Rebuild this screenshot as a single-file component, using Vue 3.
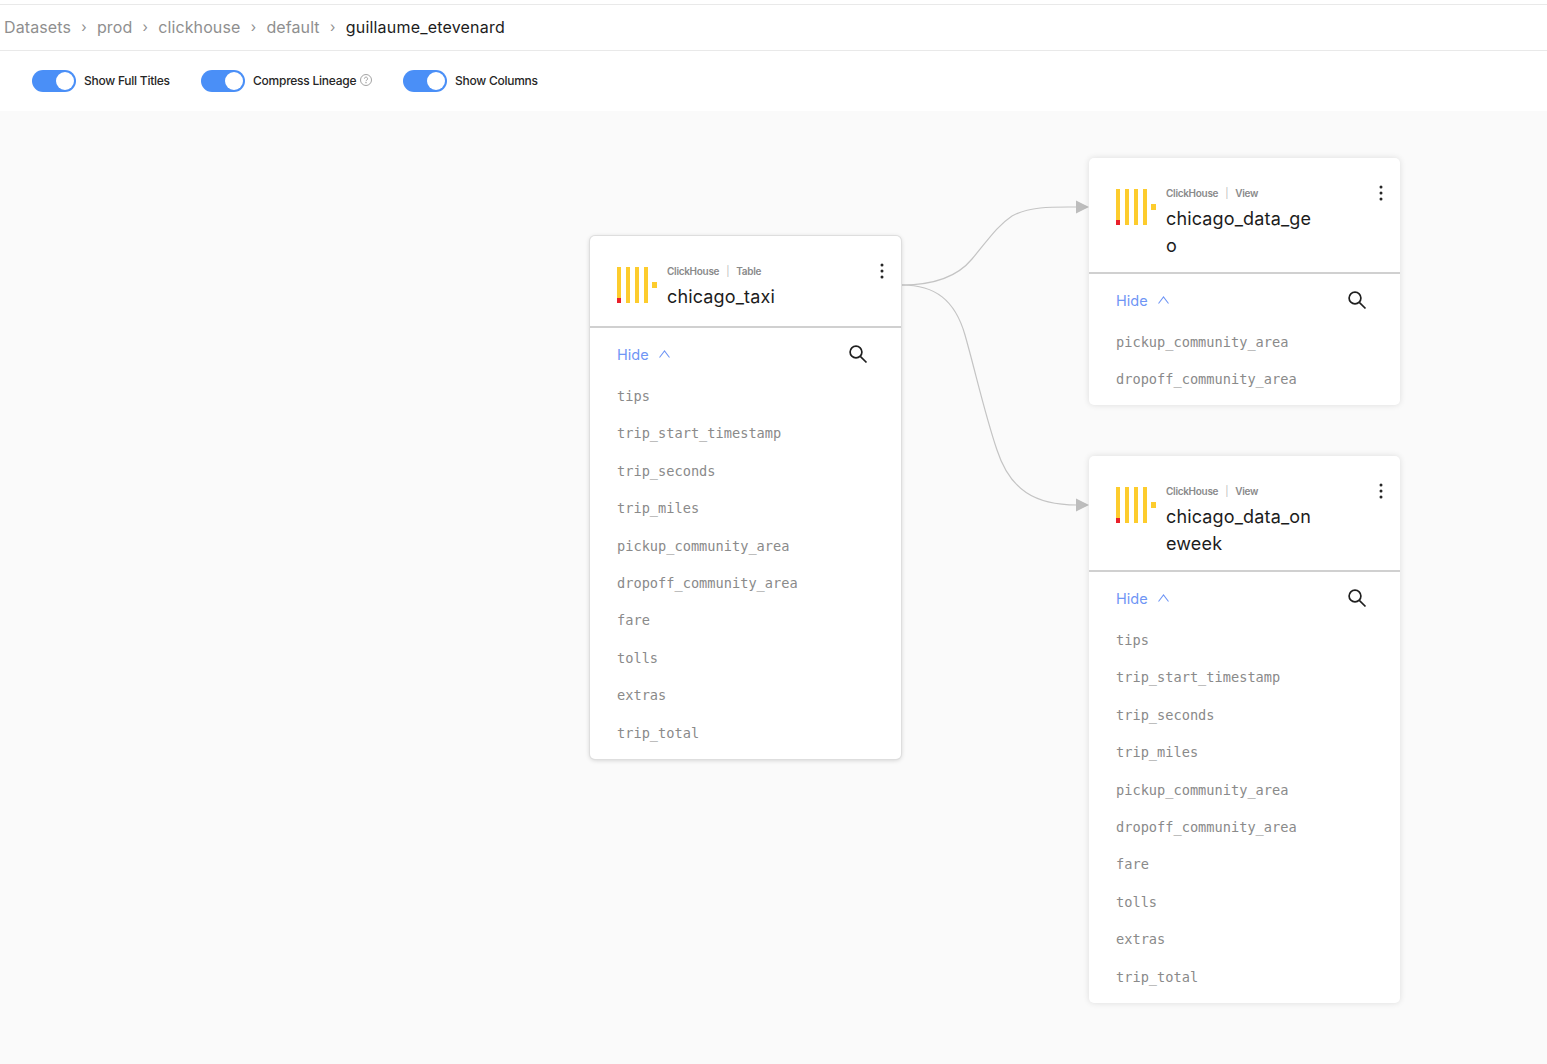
<script setup>
const crumbs = ["Datasets", "prod", "clickhouse", "default"]

const allColumns = [
  "tips",
  "trip_start_timestamp",
  "trip_seconds",
  "trip_miles",
  "pickup_community_area",
  "dropoff_community_area",
  "fare",
  "tolls",
  "extras",
  "trip_total",
]

const nodes = [
  { id: "taxi", kind: "Table", title: "chicago_taxi", x: 590, y: 125, columns: allColumns },
  { id: "geo", kind: "View", title: "chicago_data_geo", x: 1089, y: 47, columns: ["pickup_community_area", "dropoff_community_area"] },
  { id: "week", kind: "View", title: "chicago_data_oneweek", x: 1089, y: 345, columns: allColumns },
]
</script>

<template>
  <div class="page">
    <nav class="crumbs">
      <template v-for="c in crumbs" :key="c">
        <span class="crumb">{{ c }}</span>
        <span class="sep">›</span>
      </template>
      <span class="crumb current">guillaume_etevenard</span>
    </nav>

    <div class="toolbar">
      <label class="opt opt-a">
        <span class="switch"><span class="knob"></span></span>
        <span class="opt-text">Show Full Titles</span>
      </label>
      <label class="opt opt-b">
        <span class="switch"><span class="knob"></span></span>
        <span class="opt-text">Compress Lineage</span>
        <svg class="help" width="12" height="12" viewBox="0 0 12 12" fill="none" stroke="#8c8c8c" stroke-width="0.8">
          <circle cx="6" cy="6" r="5.5" />
          <path d="M4.4 4.7a1.6 1.6 0 1 1 2.5 1.3c-.6.4-.9.6-.9 1.2" />
          <circle cx="6" cy="8.8" r=".3" />
        </svg>
      </label>
      <label class="opt">
        <span class="switch"><span class="knob"></span></span>
        <span class="opt-text">Show Columns</span>
      </label>
    </div>

    <div class="canvas">
      <svg class="edges" width="1547" height="953" viewBox="0 111 1547 953" fill="none">
        <path d="M902 285C935 285 958 276 972 259C988 240 997 226 1012 216C1030 206 1055 207 1077 207" stroke="#c4c4c4" stroke-width="1.2" />
        <path d="M902 285C935 285 955 300 965 335C975 370 985 415 997 450C1010 490 1035 505 1077 505" stroke="#c4c4c4" stroke-width="1.2" />
        <path d="M1076 200.500L1089 207L1076 213.500Z" fill="#bdbdbd" />
        <path d="M1076 498.500L1089 505L1076 511.500Z" fill="#bdbdbd" />
      </svg>

      <section
        v-for="node in nodes"
        :key="node.id"
        class="node"
        :class="{ 'node-raised': node.id === 'taxi' }"
        :style="{ left: node.x + 'px', top: node.y + 'px' }"
      >
        <header class="node-head">
          <svg class="logo" width="41" height="36" viewBox="0 0 41 36">
            <rect x="0" y="0" width="4" height="36" fill="#fdcc2d" />
            <rect x="0" y="31" width="4" height="5" fill="#e9202a" />
            <rect x="9" y="0" width="4" height="36" fill="#fdcc2d" />
            <rect x="18" y="0" width="4" height="36" fill="#fdcc2d" />
            <rect x="27" y="0" width="4" height="36" fill="#fdcc2d" />
            <rect x="35" y="15" width="5" height="6" fill="#fdcc2d" />
          </svg>
          <div class="head-text">
            <div class="meta">
              <span>ClickHouse</span>
              <span class="bar">|</span>
              <span>{{ node.kind }}</span>
            </div>
            <div class="title">{{ node.title }}</div>
          </div>
          <svg class="dots" width="4" height="16" viewBox="0 0 4 16" fill="#262626">
            <circle cx="2" cy="2" r="1.500" />
            <circle cx="2" cy="8" r="1.500" />
            <circle cx="2" cy="14" r="1.500" />
          </svg>
        </header>

        <div class="columns-bar">
          <span class="hide">Hide</span>
          <svg class="chev" width="11" height="8" viewBox="0 0 11 8" fill="none" stroke="#6f95f5" stroke-width="1.100">
            <path d="M.5 7.500L5.500 1L10.500 7.500" />
          </svg>
          <svg class="search" width="20" height="20" viewBox="0 0 20 20" fill="none" stroke="#1f1f1f" stroke-width="1.700">
            <circle cx="8" cy="8" r="5.900" />
            <path d="M12.300 12.300L18.500 18.500" />
          </svg>
        </div>

        <ul class="columns">
          <li v-for="col in node.columns" :key="col">{{ col }}</li>
        </ul>
      </section>
    </div>
  </div>
</template>

<style>
html,
body {
  margin: 0;
  background: #fff;
}
</style>

<style scoped>
.page {
  height: 1064px;
  overflow: hidden;
  padding-top: 4px;
  box-sizing: border-box;
  font-family: Inter, "Noto Sans", sans-serif;
  background: #fff;
}

.crumbs {
  display: flex;
  align-items: center;
  height: 47px;
  box-sizing: border-box;
  padding: 0 0 2px 4px;
  border-top: 1px solid #e9e9e9;
  border-bottom: 1px solid #e9e9e9;
  font-size: 16px;
  letter-spacing: 0.1px;
  color: #8f8f8f;
}

.sep {
  width: 26px;
  text-align: center;
  font-size: 14px;
}

.current {
  color: #1c1c1c;
  letter-spacing: 0.2px;
}

.toolbar {
  display: flex;
  align-items: center;
  height: 60px;
  padding-left: 32px;
}

.opt {
  display: flex;
  align-items: center;
  font-size: 12px;
  font-weight: 550;
  letter-spacing: -0.25px;
  color: #262626;
}

.opt-text {
  margin-bottom: 2px;
}

.opt-a {
  width: 169px;
}

.opt-b {
  width: 202px;
}

.switch {
  display: flex;
  justify-content: flex-end;
  align-items: center;
  width: 44px;
  height: 22px;
  box-sizing: border-box;
  padding-right: 2px;
  border-radius: 11px;
  background: #4a8ff7;
  margin-right: 8px;
}

.knob {
  width: 18px;
  height: 18px;
  border-radius: 50%;
  background: #fff;
}

.help {
  margin: 0 0 2px 4px;
}

.canvas {
  position: relative;
  height: 953px;
  background: #fafafa;
}

.edges {
  position: absolute;
  left: 0;
  top: 0;
}

.node {
  position: absolute;
  width: 311px;
  background: #fff;
  border-radius: 5px;
  box-shadow: 0 0 6px rgba(0, 0, 0, 0.12);
}

.node-raised {
  box-shadow: 0 0 0 1px #dedede, 0 1px 5px rgba(0, 0, 0, 0.2);
}

.node-head {
  display: flex;
  align-items: flex-start;
  box-sizing: border-box;
  min-height: 92px;
  padding: 24px 0 13.5px 27px;
  border-bottom: 2px solid #d0d0d0;
  position: relative;
}

.logo {
  flex: none;
  margin-top: 7px;
  margin-right: 9px;
}

.head-text {
  width: 150px;
}

.meta {
  display: flex;
  align-items: center;
  height: 22.5px;
  font-size: 10px;
  font-weight: 600;
  letter-spacing: -0.3px;
  color: #8a8a8a;
}

.bar {
  margin: 0 7px;
  font-weight: 400;
  color: #bdbdbd;
}

.title {
  font-size: 18px;
  line-height: 27px;
  letter-spacing: 0.15px;
  color: #1c1c1c;
  word-break: break-all;
}

.dots {
  position: absolute;
  right: 17.500px;
  top: 27px;
}

.columns-bar {
  display: flex;
  align-items: center;
  height: 56px;
  padding-left: 27px;
  position: relative;
  top: -2px;
}

.hide {
  font-size: 14.5px;
  color: #6f95f5;
  margin-right: 10px;
}

.search {
  position: absolute;
  left: 258px;
  top: 18px;
}

.columns {
  list-style: none;
  margin: -6px 0 0;
  padding: 0 0 6.6px 27px;
  font-family: "DejaVu Sans Mono", "Liberation Mono", monospace;
  font-size: 13.65px;
  color: #8a8a8a;
}

.columns li {
  height: 37.4px;
  line-height: 37.4px;
}
</style>
